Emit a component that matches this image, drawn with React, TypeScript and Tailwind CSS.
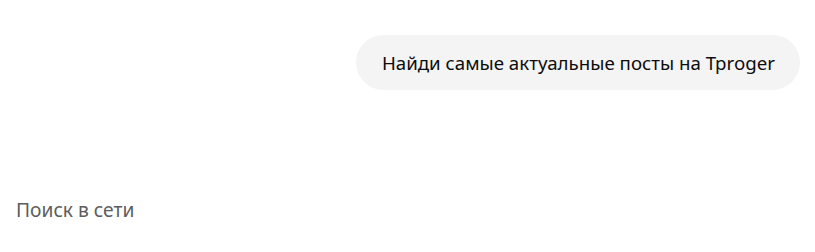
export default function App() {
  return (
    <div className="w-[815px] h-[252px] bg-white flex flex-col pl-4 pr-[15px] pt-[35px]" style={{ fontFamily: '"Noto Sans", "Open Sans", sans-serif' }}>
      <div className="flex justify-end">
        <div className="bg-[#f4f4f4] rounded-full h-[55px] pl-[26px] pr-[25px] pt-[1px] flex items-center text-[18.7px] leading-[24px] text-[#0d0d0d]">
          Найди самые актуальные посты на Tproger
        </div>
      </div>
      <div className="mt-[108px] text-[19.2px] leading-[24px] text-[#5d5d5d]">Поиск в сети</div>
    </div>
  );
}
